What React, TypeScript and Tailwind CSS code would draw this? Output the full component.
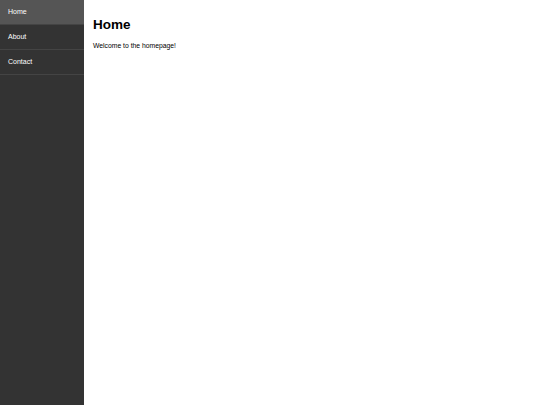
const links = ["Home", "About", "Contact"];

export default function App() {
  const active = "Home";

  return (
    <div className="flex h-[405px] w-full bg-white font-['Liberation_Sans',Arial,sans-serif]">
      <nav className="flex w-[84px] shrink-0 flex-col bg-[#333333]">
        {links.map((link) => (
          <a
            key={link}
            href="#"
            className={
              link === active
                ? "flex h-[25px] items-center border-b border-[#444444] bg-[#555555] px-[8px] text-[7px] text-white"
                : "flex h-[25px] items-center border-b border-[#444444] px-[8px] text-[7px] text-white"
            }
          >
            {link}
          </a>
        ))}
      </nav>

      <main className="flex-1 px-[9px] pt-[15px] text-black">
        <h1 className="text-[13.5px] font-bold leading-normal">Home</h1>
        <p className="mt-[6px] text-[6.8px] leading-normal">Welcome to the homepage!</p>
      </main>
    </div>
  );
}
